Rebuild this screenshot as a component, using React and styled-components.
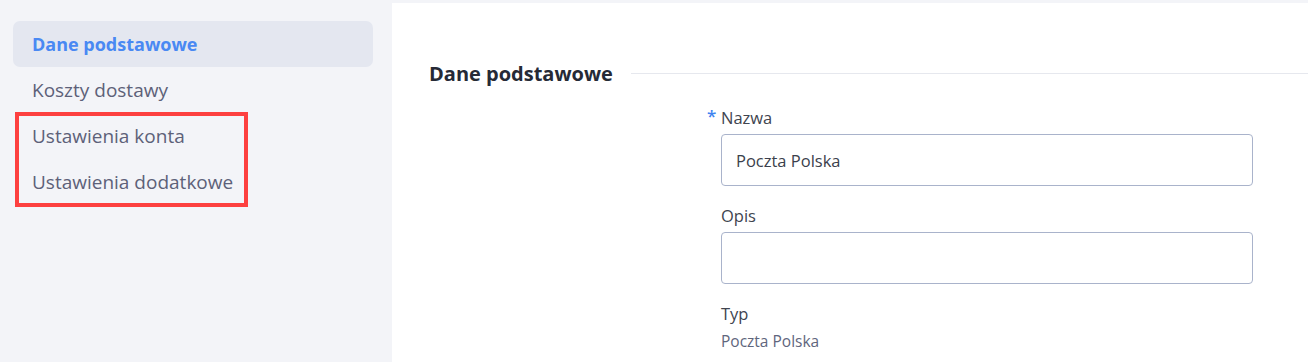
import React from 'react';
import styled, { createGlobalStyle } from 'styled-components';

const GlobalStyle = createGlobalStyle`
  html, body {
    margin: 0;
    padding: 0;
    background: #f3f4f8;
    font-family: "Open Sans", "Noto Sans", sans-serif;
  }
  * {
    box-sizing: border-box;
  }
`;

const Page = styled.div`
  display: flex;
  min-height: 100vh;
  background: #f3f4f8;
`;

const Sidebar = styled.nav`
  width: 392px;
  flex-shrink: 0;
  padding: 21px 19px 0 13px;
`;

const NavItem = styled.div`
  display: flex;
  align-items: center;
  height: 46px;
  padding-left: 19px;
  border-radius: 7px;
  font-size: ${p => (p.$active ? '18px' : '19px')};
  font-weight: ${p => (p.$active ? 700 : 400)};
  color: ${p => (p.$active ? '#4a89f3' : '#5d6179')};
  background: ${p => (p.$active ? '#e4e7f0' : 'transparent')};
`;

const Marked = styled.div`
  position: relative;
`;

const MarkBox = styled.div`
  position: absolute;
  top: -1px;
  left: 2px;
  width: 233px;
  height: 95px;
  border: 4px solid #fd4040;
  pointer-events: none;
`;

const Main = styled.main`
  flex: 1;
  margin-top: 3px;
  background: #ffffff;
  padding: 56px 0 0 37px;
`;

const SectionHeader = styled.div`
  display: flex;
  align-items: center;
  height: 28px;
`;

const SectionTitle = styled.h2`
  margin: 0;
  font-size: 20px;
  font-weight: 700;
  color: #262a36;
  white-space: nowrap;
`;

const Rule = styled.div`
  flex: 1;
  height: 1px;
  margin-left: 18px;
  background: #e6e8ee;
`;

const Form = styled.div`
  display: flex;
  flex-direction: column;
  width: 532px;
  margin: 19px 0 0 292px;
`;

const Field = styled.div`
  display: flex;
  flex-direction: column;
  margin-bottom: 18px;
`;

const Label = styled.label`
  position: relative;
  height: 24px;
  line-height: 24px;
  margin-bottom: 4px;
  font-size: 16.5px;
  color: #40444f;
`;

const Star = styled.span`
  position: absolute;
  left: -14px;
  top: -2px;
  color: #3f83f0;
  font-size: 17px;
  font-weight: 600;
`;

const Input = styled.input`
  height: 52px;
  padding: 0 14px;
  border: 1px solid #a9b3cb;
  border-radius: 4px;
  font-family: inherit;
  font-size: 16.5px;
  color: #3b3f4c;
  outline: none;
  background: #fff;
`;

const Value = styled.div`
  height: 22px;
  line-height: 22px;
  font-size: 15.5px;
  color: #5f667d;
`;

export default function App() {
  return (
    <>
      <GlobalStyle />
      <Page>
        <Sidebar>
          <NavItem $active>Dane podstawowe</NavItem>
          <NavItem>Koszty dostawy</NavItem>
          <Marked>
            <NavItem>Ustawienia konta</NavItem>
            <NavItem>Ustawienia dodatkowe</NavItem>
            <MarkBox />
          </Marked>
        </Sidebar>
        <Main>
          <SectionHeader>
            <SectionTitle>Dane podstawowe</SectionTitle>
            <Rule />
          </SectionHeader>
          <Form>
            <Field>
              <Label>
                <Star>*</Star>Nazwa
              </Label>
              <Input defaultValue="Poczta Polska" />
            </Field>
            <Field>
              <Label>Opis</Label>
              <Input defaultValue="" />
            </Field>
            <Field>
              <Label>Typ</Label>
              <Value>Poczta Polska</Value>
            </Field>
          </Form>
        </Main>
      </Page>
    </>
  );
}
